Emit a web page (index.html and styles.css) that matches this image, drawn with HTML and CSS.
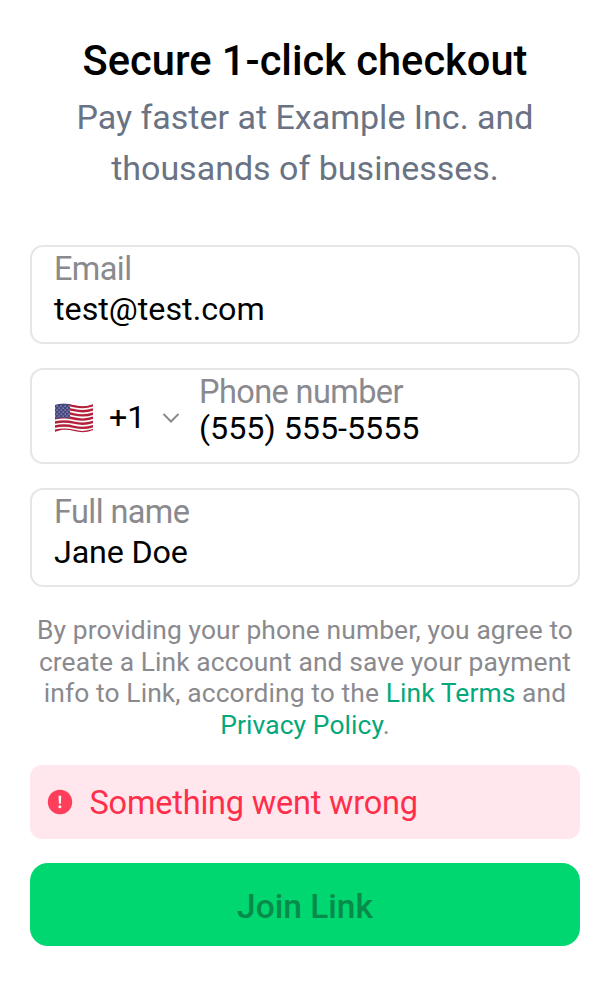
FILE: index.html
```html
<!DOCTYPE html>
<html lang="en">
<head>
<meta charset="utf-8">
<title>Secure 1-click checkout</title>
<link rel="stylesheet" href="styles.css">
</head>
<body>
<main class="sheet">
  <h1 class="title">Secure 1-click checkout</h1>
  <p class="subtitle">Pay faster at Example Inc. and<br>thousands of businesses.</p>
  <div class="field email">
    <span class="label">Email</span>
    <span class="value">test@test.com</span>
  </div>
  <div class="field phone">
    <div class="country">
      <svg class="flag" viewBox="0 0 40 30" width="40" height="30">
        <defs>
          <clipPath id="wave"><path d="M1 2C8 0 14 .5 20 2S32 4 39 1V27C32 30 26 29.500 20 28S8 26 1 29Z"/></clipPath>
          <pattern id="stars" width="4" height="4" patternUnits="userSpaceOnUse"><path d="M.5.5h1.200v1.200H.5zM2.500 2.500h1.200v1.200H2.500z" fill="#a9a9cd"/></pattern>
        </defs>
        <g clip-path="url(#wave)">
          <path fill="#fafafa" d="M0 0H40V30H0Z"/>
          <g fill="none" stroke="#b3203a" stroke-width="2.400">
            <path d="M0 3C8 1 14 1.500 20 3S32 5 40 2"/><path d="M0 7.200C8 5.200 14 5.700 20 7.200S32 9.200 40 6.200"/><path d="M0 11.300C8 9.300 14 9.800 20 11.300S32 13.300 40 10.300"/><path d="M0 15.500C8 13.500 14 14 20 15.500S32 17.500 40 14.500"/><path d="M0 19.700C8 17.700 14 18.200 20 19.700S32 21.700 40 18.700"/><path d="M0 23.800C8 21.800 14 22.300 20 23.800S32 25.800 40 22.800"/><path d="M0 28C8 26 14 26.500 20 28S32 30 40 27"/>
          </g>
          <path fill="#46467f" d="M0 0H16V15.500C10 14.500 6 14.500 0 16.500Z"/>
          <path fill="url(#stars)" d="M1 2H16V15C10 14 6 14 1 15.500Z"/>
        </g>
      </svg>
      <span class="code">+1</span>
      <svg class="chevron" viewBox="0 0 18 12" width="18" height="12"><path d="M1.500 2 9 9.500 16.500 2" fill="none" stroke="#8a8a8e" stroke-width="2"/></svg>
    </div>
    <div class="number">
      <span class="label">Phone number</span>
      <span class="value">(555) 555-5555</span>
    </div>
  </div>
  <div class="field name">
    <span class="label">Full name</span>
    <span class="value">Jane Doe</span>
  </div>
  <p class="terms">By providing your phone number, you agree to<br>create a Link account and save your payment<br>info to Link, according to the <a class="link">Link Terms</a> and<br><a class="link">Privacy Policy</a>.</p>
  <div class="error">
    <svg class="alert" viewBox="0 0 26 26" width="26" height="26"><circle cx="13" cy="13" r="12.200" fill="#ff3e5b"/><path d="M11.600 6.800h2.600l-.3 8h-2z" fill="#fff"/><circle cx="12.900" cy="17.800" r="1.500" fill="#fff"/></svg>
    <span class="message">Something went wrong</span>
  </div>
  <button class="join">Join Link</button>
</main>
</body>
</html>
```
FILE: styles.css
```css
* { box-sizing: border-box; }
body { margin: 0; background: #fff; font-family: Roboto, sans-serif; color: #000; }
.sheet { display: flex; flex-direction: column; padding: 35px 30px 0; }
.title { margin: 0; font-size: 41.600px; line-height: 51px; font-weight: 500; text-align: center; }
.subtitle { margin: 6px 0 51px; font-size: 34px; line-height: 51px; color: #6a7383; text-align: center; }
.field { display: flex; flex-direction: column; border: 2px solid #e6e6e6; border-radius: 13px; padding: 0 22px; }
.label { font-size: 32.500px; line-height: 38px; letter-spacing: -0.6px; color: #8a8a8e; }
.value { font-size: 32.250px; line-height: 38px; }
.email, .name { height: 99px; padding-top: 3px; gap: 2px; }
.name .value { letter-spacing: -0.15px; }
.phone { height: 96px; margin: 24px 0; flex-direction: row; }
.country { display: flex; align-items: center; width: 145px; padding-top: 3px; }
.code { font-size: 32.250px; line-height: 38px; margin-left: 15px; padding-bottom: 1px; }
.chevron { margin-left: 17px; }
.number { display: flex; flex-direction: column; padding-top: 3px; }
.number .value { margin-top: -2px; }
.terms { margin: 28px 0 23px; font-size: 26.400px; line-height: 31.700px; letter-spacing: 0.1px; color: #8a8a8e; text-align: center; white-space: nowrap; }
.link { color: #05a87a; }
.error { display: flex; align-items: center; height: 74px; border-radius: 12px; padding: 1px 17px 0; gap: 16.500px; background: #ffe7ed; color: #ff2f4c; }
.message { font-size: 32.500px; letter-spacing: -0.2px; padding-top: 1px; }
.join { height: 83px; margin-top: 24px; padding-top: 6px; border: 0; border-radius: 18px; background: #00d770; color: #078b4b; font: 500 33.500px Roboto, sans-serif; }
```
